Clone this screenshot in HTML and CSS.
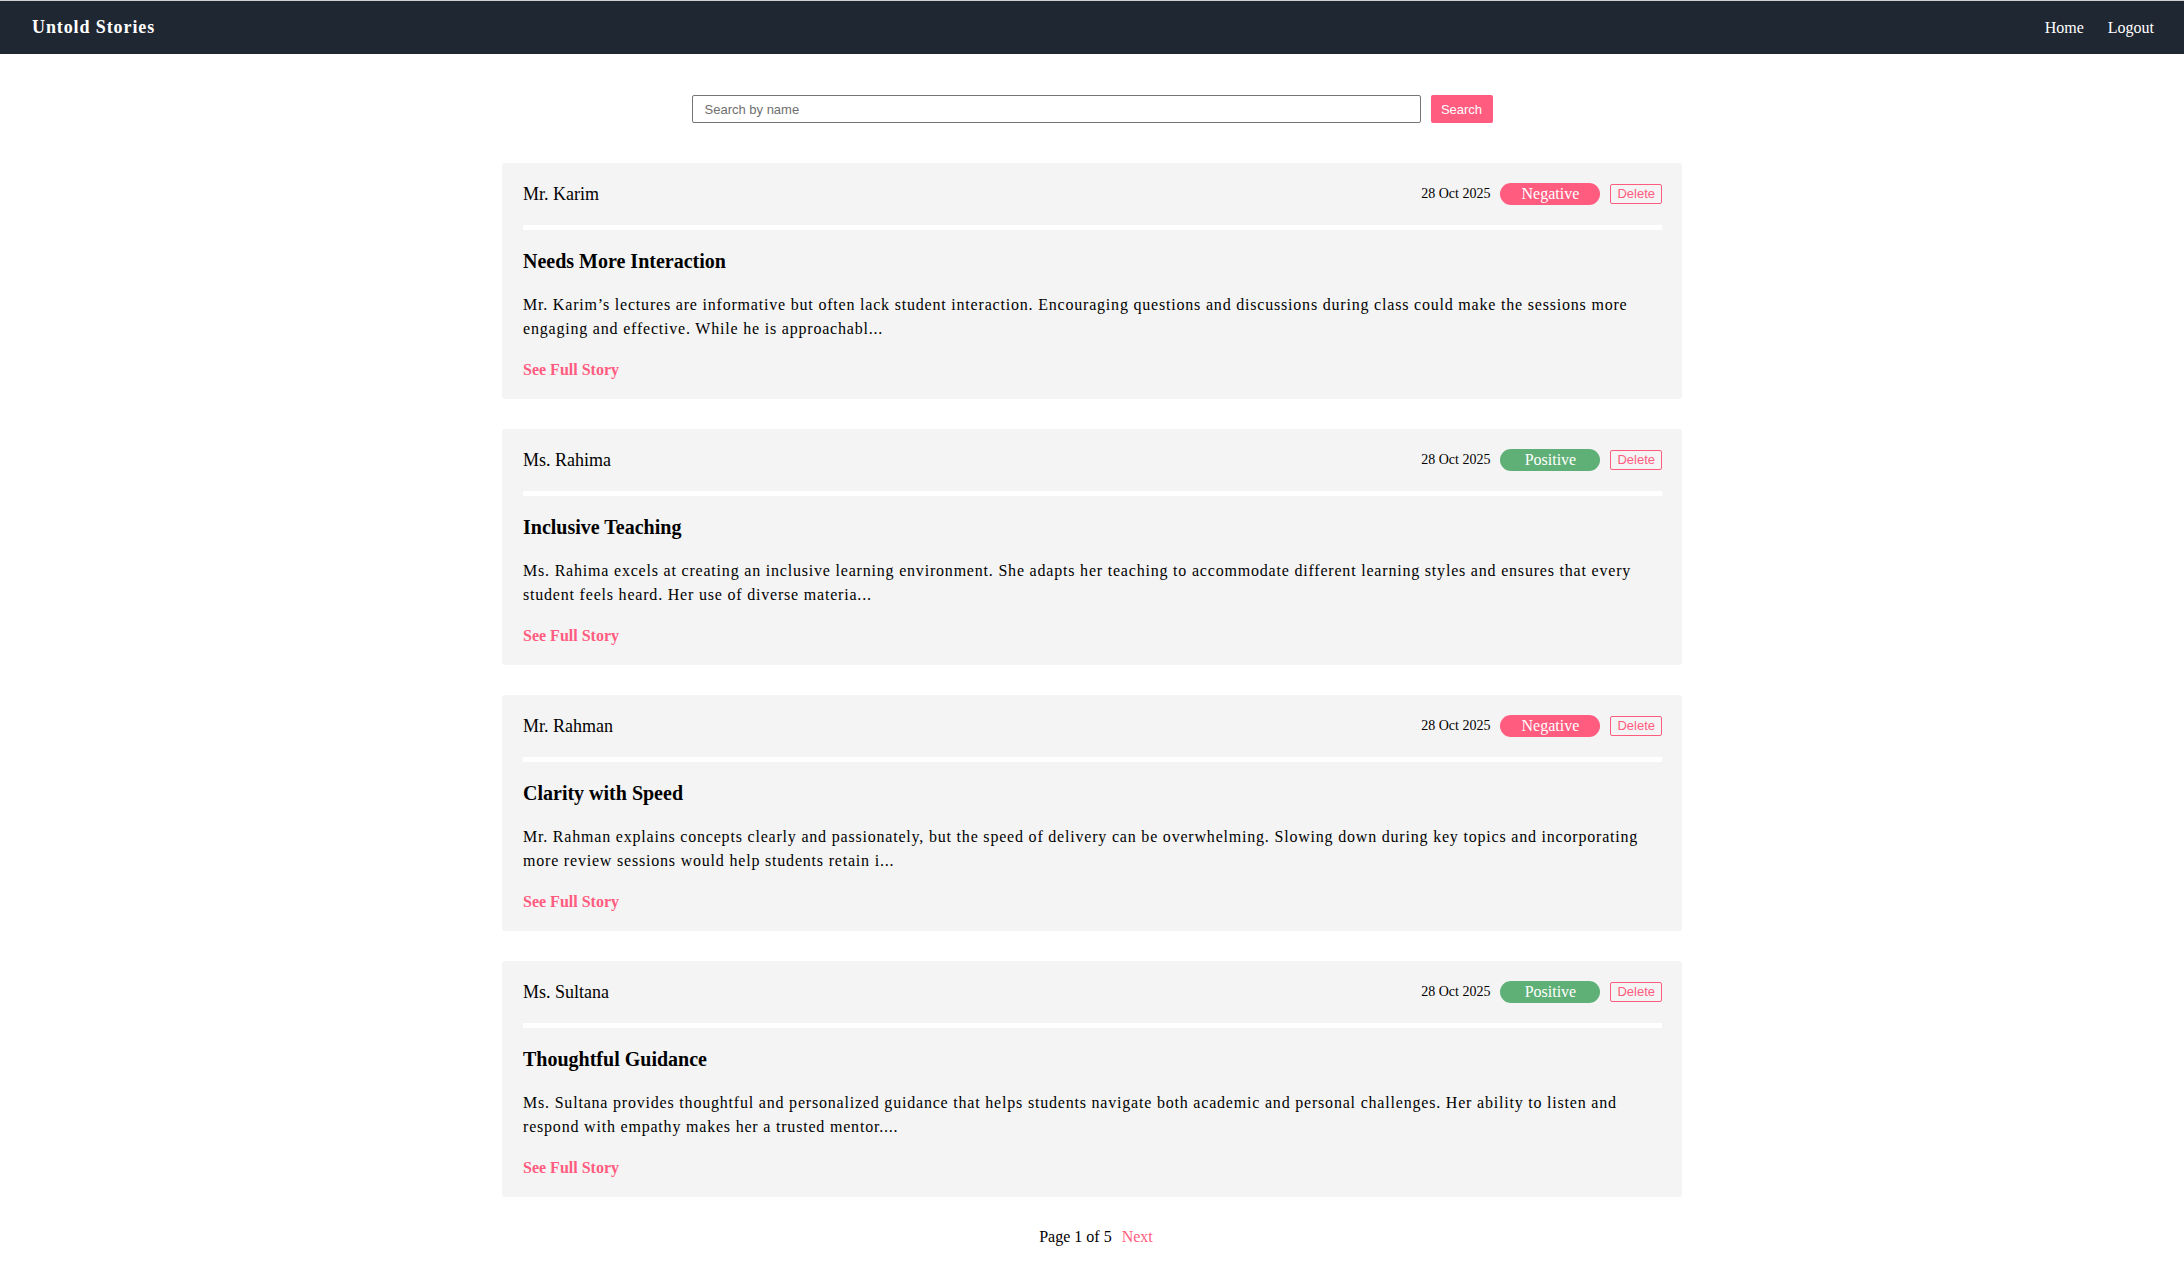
FILE: index.html
```html
<!DOCTYPE html>
<html lang="en">
<head>
<meta charset="utf-8">
<title>Untold Stories</title>
<link rel="stylesheet" href="styles.css">
</head>
<body>
<nav class="navbar">
  <a class="brand" href="#">Untold Stories</a>
  <div class="nav-links">
    <a href="#">Home</a>
    <a href="#">Logout</a>
  </div>
</nav>

<main class="main">
  <form class="search">
    <input class="search-input" type="text" placeholder="Search by name">
    <button class="search-btn" type="button">Search</button>
  </form>

  <section class="stories">
    <article class="card">
      <div class="card-head">
        <span class="name">Mr. Karim</span>
        <div class="meta">
          <span class="date">28 Oct 2025</span>
          <span class="badge negative">Negative</span>
          <button class="delete" type="button">Delete</button>
        </div>
      </div>
      <div class="divider"></div>
      <h2 class="title">Needs More Interaction</h2>
      <p class="excerpt">Mr. Karim’s lectures are informative but often lack student interaction. Encouraging questions and discussions during class could make the sessions more engaging and effective. While he is approachabl...</p>
      <a class="more" href="#">See Full Story</a>
    </article>

    <article class="card">
      <div class="card-head">
        <span class="name">Ms. Rahima</span>
        <div class="meta">
          <span class="date">28 Oct 2025</span>
          <span class="badge positive">Positive</span>
          <button class="delete" type="button">Delete</button>
        </div>
      </div>
      <div class="divider"></div>
      <h2 class="title">Inclusive Teaching</h2>
      <p class="excerpt">Ms. Rahima excels at creating an inclusive learning environment. She adapts her teaching to accommodate different learning styles and ensures that every student feels heard. Her use of diverse materia...</p>
      <a class="more" href="#">See Full Story</a>
    </article>

    <article class="card">
      <div class="card-head">
        <span class="name">Mr. Rahman</span>
        <div class="meta">
          <span class="date">28 Oct 2025</span>
          <span class="badge negative">Negative</span>
          <button class="delete" type="button">Delete</button>
        </div>
      </div>
      <div class="divider"></div>
      <h2 class="title">Clarity with Speed</h2>
      <p class="excerpt">Mr. Rahman explains concepts clearly and passionately, but the speed of delivery can be overwhelming. Slowing down during key topics and incorporating more review sessions would help students retain i...</p>
      <a class="more" href="#">See Full Story</a>
    </article>

    <article class="card">
      <div class="card-head">
        <span class="name">Ms. Sultana</span>
        <div class="meta">
          <span class="date">28 Oct 2025</span>
          <span class="badge positive">Positive</span>
          <button class="delete" type="button">Delete</button>
        </div>
      </div>
      <div class="divider"></div>
      <h2 class="title">Thoughtful Guidance</h2>
      <p class="excerpt">Ms. Sultana provides thoughtful and personalized guidance that helps students navigate both academic and personal challenges. Her ability to listen and respond with empathy makes her a trusted mentor....</p>
      <a class="more" href="#">See Full Story</a>
    </article>
  </section>

  <div class="pagination">
    <span class="page-info">Page 1 of 5</span>
    <a class="next" href="#">Next</a>
  </div>
</main>
</body>
</html>
```
FILE: styles.css
```css
* {
  box-sizing: border-box;
}

html, body {
  margin: 0;
  padding: 0;
  background: #ffffff;
}

body {
  font-family: "Liberation Serif", "Times New Roman", serif;
  color: #000000;
  font-size: 16px;
}

a {
  text-decoration: none;
}

.navbar {
  display: flex;
  align-items: center;
  justify-content: space-between;
  height: 54px;
  padding: 0 30px 0 32px;
  background: #1f2733;
  border-top: 1px solid #cfd1d4;
}

.brand {
  color: #ffffff;
  font-weight: bold;
  font-size: 18px;
  letter-spacing: 0.05em;
}

.nav-links {
  display: flex;
  gap: 24px;
  padding-top: 1px;
}

.nav-links a {
  color: #ffffff;
  font-size: 16px;
}

.main {
  padding-top: 41px;
}

.search {
  display: flex;
  justify-content: center;
  gap: 10px;
  margin: 0;
}

.search-input {
  width: 729px;
  height: 28px;
  border: 1px solid #767676;
  border-radius: 2px;
  padding: 0 12px;
  font-family: "Liberation Sans", Arial, sans-serif;
  font-size: 13px;
  color: #333333;
  background: #ffffff;
}

.search-input::placeholder {
  color: #6f6f6f;
}

.search-btn {
  height: 28px;
  width: 62px;
  padding: 0;
  border: none;
  border-radius: 2px;
  background: #ff5c80;
  color: #ffffff;
  font-family: "Liberation Sans", Arial, sans-serif;
  font-size: 13px;
}

.stories {
  width: 1180px;
  margin: 40px auto 0;
  display: flex;
  flex-direction: column;
  gap: 30px;
}

.card {
  background: #f4f4f4;
  border-radius: 3px;
  padding: 20px 20px 20px 21px;
}

.card-head {
  display: flex;
  align-items: center;
  justify-content: space-between;
  height: 22px;
}

.name {
  font-size: 18px;
  line-height: 22px;
}

.meta {
  display: flex;
  align-items: center;
  gap: 10px;
}

.date {
  font-size: 14px;
}

.badge {
  display: inline-block;
  width: 100px;
  height: 22px;
  line-height: 22px;
  border-radius: 11px;
  text-align: center;
  color: #ffffff;
  font-size: 16px;
}

.badge.negative {
  background: #ff5c80;
}

.badge.positive {
  background: #5fb077;
}

.delete {
  height: 20px;
  padding: 0 6px;
  border: 1px solid #ff5c80;
  border-radius: 2px;
  background: transparent;
  color: #ff5c80;
  font-family: "Liberation Sans", Arial, sans-serif;
  font-size: 13px;
  line-height: 18px;
}

.divider {
  height: 5px;
  background: #ffffff;
  margin-top: 20px;
}

.title {
  margin: 20px 0 0;
  font-size: 20px;
  font-weight: bold;
  line-height: 23px;
}

.excerpt {
  margin: 20px 0 0;
  font-size: 16px;
  line-height: 24px;
  letter-spacing: 0.05em;
}

.more {
  display: block;
  margin-top: 20px;
  color: #ff5c80;
  font-weight: bold;
  font-size: 16px;
  line-height: 18px;
}

.pagination {
  display: flex;
  justify-content: center;
  gap: 10px;
  margin: 30px 0 20px;
  padding-left: 8px;
  font-size: 16px;
  line-height: 20px;
}

.next {
  color: #ff5c80;
}
```
